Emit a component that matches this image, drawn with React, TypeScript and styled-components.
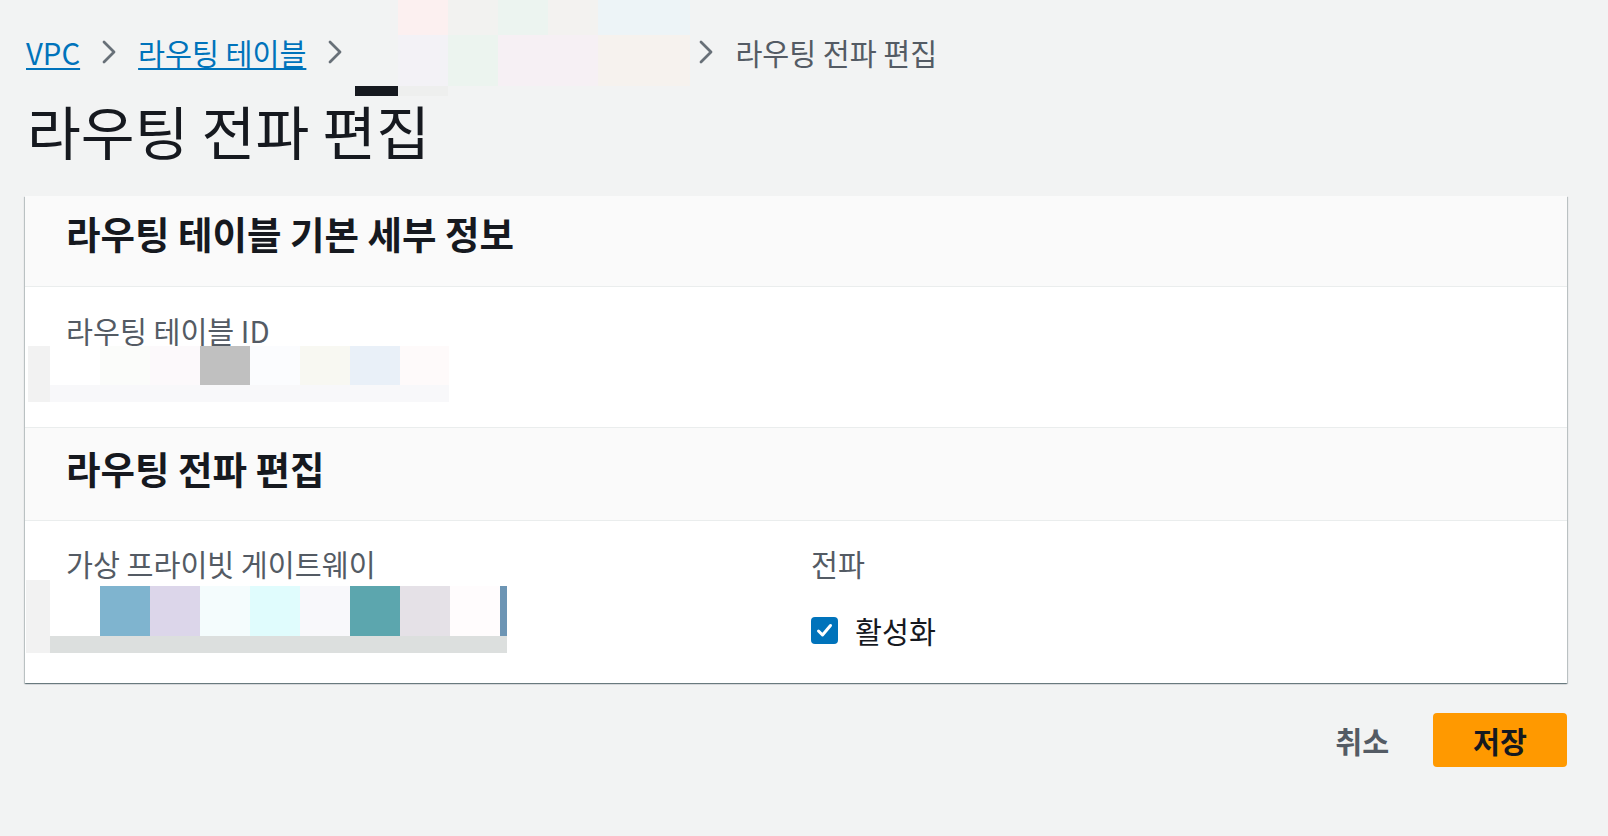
import styled, { createGlobalStyle } from 'styled-components';

const GlobalStyle = createGlobalStyle`
  html, body {
    margin: 0;
    padding: 0;
    background: #f2f3f3;
  }
  body {
    font-family: "Noto Sans CJK KR", "Noto Sans", sans-serif;
    color: #16191f;
  }
  * {
    box-sizing: border-box;
  }
`;

const Page = styled.div`
  min-height: 836px;
  padding: 33px 41px 0 25px;
`;

const Breadcrumbs = styled.nav`
  display: flex;
  align-items: center;
  gap: 21px;
  height: 38px;
  padding-left: 1px;
  font-size: 29.3px;
  line-height: 38px;
`;

const CrumbLink = styled.a`
  color: #0073bb;
  text-decoration: underline;
  text-decoration-thickness: 2px;
  text-underline-offset: 3px;
  cursor: pointer;
`;

const CrumbCurrent = styled.span`
  color: #545b64;
`;

const HiddenCrumb = styled.span`
  position: relative;
  width: 313px;
  height: 38px;
`;

const CrumbOverlay = styled.div`
  position: absolute;
  left: -9px;
  top: -33px;
`;

const Title = styled.h1`
  margin: 27px 0 0 2px;
  font-size: 58.5px;
  font-weight: 400;
  line-height: 64px;
  color: #16191f;
`;

const Card = styled.section`
  margin-top: 34px;
  background: #ffffff;
  box-shadow: 0 1px 1px 0 rgba(0, 28, 36, 0.35), 1px 1px 1px 0 rgba(0, 28, 36, 0.18),
    -1px 1px 1px 0 rgba(0, 28, 36, 0.18);
`;

const CardHeader = styled.h2<{ $top: number; $bottom: number }>`
  margin: 0;
  padding: ${({ $top, $bottom }) => `${$top}px 39px ${$bottom}px 41px`};
  background: #fafafa;
  border-bottom: 1px solid #eaeded;
  font-size: 37.5px;
  font-weight: 700;
  line-height: 44px;
  color: #16191f;
`;

const CardBody = styled.div<{ $top: number; $bottom: number; $divider?: boolean }>`
  padding: ${({ $top, $bottom }) => `${$top}px 39px ${$bottom}px 41px`};
  border-bottom: ${({ $divider }) => ($divider ? '1px solid #eaeded' : 'none')};
`;

const Columns = styled.div`
  display: grid;
  grid-template-columns: 715px 1fr;
  gap: 30px;
`;

const Field = styled.div`
  display: flex;
  flex-direction: column;
`;

const Label = styled.div`
  font-size: 29.3px;
  line-height: 32px;
  color: #545b64;
`;

const CheckRow = styled.label`
  display: flex;
  align-items: center;
  gap: 17px;
  margin-top: 32px;
  height: 38px;
  font-size: 29.3px;
  line-height: 38px;
  color: #16191f;
`;

const CheckBox = styled.span`
  display: flex;
  align-items: center;
  justify-content: center;
  width: 27px;
  height: 27px;
  border-radius: 4px;
  background: #0073bb;
`;

const Actions = styled.div`
  display: flex;
  justify-content: flex-end;
  align-items: center;
  gap: 22px;
  margin-top: 30px;
`;

const Button = styled.button<{ $primary?: boolean }>`
  height: 54px;
  padding: ${({ $primary }) => ($primary ? '0 40px' : '0 22px')};
  border: none;
  border-radius: 4px;
  background: ${({ $primary }) => ($primary ? '#ff9900' : 'transparent')};
  color: ${({ $primary }) => ($primary ? '#16191f' : '#545b64')};
  font-family: inherit;
  font-size: 29.3px;
  font-weight: 700;
  line-height: 54px;
  cursor: pointer;
`;

/* redaction mosaic blocks */
const MosaicWrap = styled.div<{ $ml: number; $mt: number }>`
  display: flex;
  margin-left: ${({ $ml }) => $ml}px;
  margin-top: ${({ $mt }) => $mt}px;
`;

const MosaicLead = styled.div<{ $w: number; $c: string }>`
  flex: none;
  width: ${({ $w }) => $w}px;
  background: ${({ $c }) => $c};
`;

const MosaicStack = styled.div`
  display: flex;
  flex-direction: column;
`;

const MosaicRow = styled.div<{ $h: number }>`
  display: flex;
  height: ${({ $h }) => $h}px;
`;

const MosaicCell = styled.div<{ $w: number; $c: string }>`
  flex: none;
  width: ${({ $w }) => $w}px;
  background: ${({ $c }) => $c};
`;

type Row = { h: number; cells: [number, string][] };

function Mosaic({ rows }: { rows: Row[] }) {
  return (
    <MosaicStack>
      {rows.map((row, i) => (
        <MosaicRow key={i} $h={row.h}>
          {row.cells.map(([w, c], j) => (
            <MosaicCell key={j} $w={w} $c={c} />
          ))}
        </MosaicRow>
      ))}
    </MosaicStack>
  );
}

const crumbRows: Row[] = [
  {
    h: 35,
    cells: [
      [43, 'transparent'],
      [50, '#fcf0f0'],
      [50, '#f2f2f0'],
      [50, '#ecf4f0'],
      [50, '#f3f2f0'],
      [92, '#edf4f7'],
    ],
  },
  {
    h: 51,
    cells: [
      [43, 'transparent'],
      [50, '#f3f2f6'],
      [50, '#ecf4ef'],
      [100, '#f6f0f4'],
      [92, '#f6f2ee'],
    ],
  },
  {
    h: 10,
    cells: [
      [43, '#16191f'],
      [50, '#eeefee'],
    ],
  },
];

const idRows: Row[] = [
  {
    h: 39,
    cells: [
      [50, '#ffffff'],
      [50, '#fbfcfa'],
      [50, '#fcf9fb'],
      [50, '#c0c0c0'],
      [50, '#fbfcfe'],
      [50, '#f8f8f2'],
      [50, '#e9f0f8'],
      [49, '#fefafa'],
    ],
  },
  { h: 17, cells: [[399, '#f8f8fa']] },
];

const vgwRows: Row[] = [
  { h: 6, cells: [[457, '#ffffff']] },
  {
    h: 50,
    cells: [
      [50, '#ffffff'],
      [50, '#7fb4cf'],
      [50, '#dcd6ea'],
      [50, '#f4fcfd'],
      [50, '#e0fcfd'],
      [50, '#f8f8fb'],
      [50, '#5ca6ae'],
      [50, '#e5e1e7'],
      [50, '#fffcfd'],
      [7, '#6d95b4'],
    ],
  },
  { h: 17, cells: [[457, '#dcdfde']] },
];

function Chevron() {
  return (
    <svg width="16" height="26" viewBox="0 0 16 26" fill="none">
      <polyline
        points="3,3 13,13 3,23"
        stroke="#687078"
        strokeWidth="2.8"
        strokeLinecap="round"
        strokeLinejoin="round"
      />
    </svg>
  );
}

function CheckIcon() {
  return (
    <svg width="19" height="19" viewBox="0 0 19 19" fill="none">
      <polyline
        points="3.5,10 7.5,14 15.5,4.5"
        stroke="#ffffff"
        strokeWidth="3"
        strokeLinecap="round"
        strokeLinejoin="round"
      />
    </svg>
  );
}

export default function App() {
  return (
    <Page>
      <GlobalStyle />
      <Breadcrumbs>
        <CrumbLink>VPC</CrumbLink>
        <Chevron />
        <CrumbLink>라우팅 테이블</CrumbLink>
        <Chevron />
        <HiddenCrumb>
          <CrumbOverlay>
            <Mosaic rows={crumbRows} />
          </CrumbOverlay>
        </HiddenCrumb>
        <Chevron />
        <CrumbCurrent>라우팅 전파 편집</CrumbCurrent>
      </Breadcrumbs>

      <Title>라우팅 전파 편집</Title>

      <Card>
        <CardHeader $top={15} $bottom={31}>
          라우팅 테이블 기본 세부 정보
        </CardHeader>
        <CardBody $top={27} $bottom={25} $divider>
          <Label>라우팅 테이블 ID</Label>
          <MosaicWrap $ml={-38} $mt={0}>
            <MosaicLead $w={22} $c="#f2f2f2" />
            <Mosaic rows={idRows} />
          </MosaicWrap>
        </CardBody>

        <CardHeader $top={18} $bottom={30}>
          라우팅 전파 편집
        </CardHeader>
        <CardBody $top={26} $bottom={30}>
          <Columns>
            <Field>
              <Label>가상 프라이빗 게이트웨이</Label>
              <MosaicWrap $ml={-40} $mt={1}>
                <MosaicLead $w={24} $c="#f2f2f2" />
                <Mosaic rows={vgwRows} />
              </MosaicWrap>
            </Field>
            <Field>
              <Label>전파</Label>
              <CheckRow>
                <CheckBox>
                  <CheckIcon />
                </CheckBox>
                활성화
              </CheckRow>
            </Field>
          </Columns>
        </CardBody>
      </Card>

      <Actions>
        <Button>취소</Button>
        <Button $primary>저장</Button>
      </Actions>
    </Page>
  );
}
